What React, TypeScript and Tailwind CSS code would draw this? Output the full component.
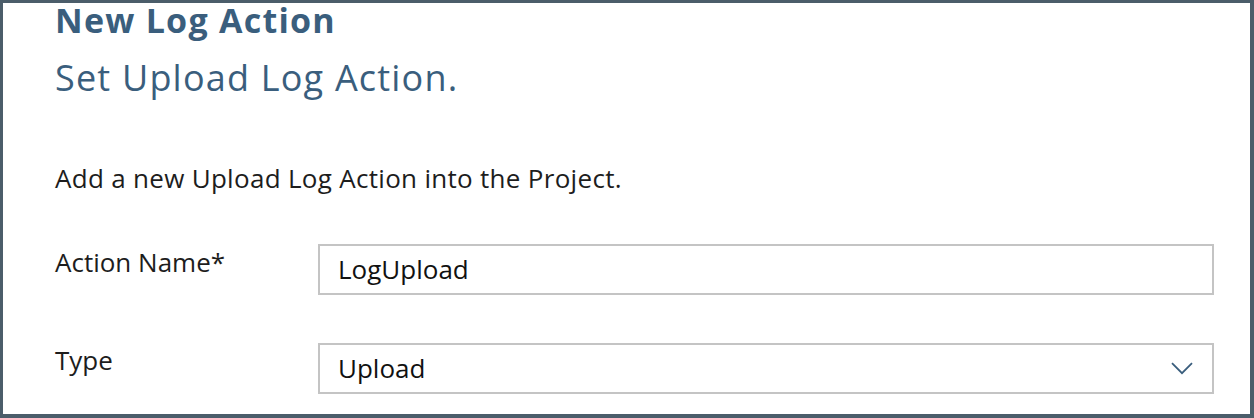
import React from 'react';

const App: React.FC = () => {
  return (
    <div className="w-[1254px] h-[418px] overflow-hidden bg-[#4b5d6a] pt-[3px] pl-[3px] pr-[4px] pb-[4px] font-['Open_Sans',sans-serif]">
      <div className="h-full bg-white pl-[52px] pr-[36px]">
        <h1 className="text-[34px] leading-[34px] font-bold tracking-[1.25px] text-[#3a5e7d]">New Log Action</h1>
        <h2 className="mt-[19px] text-[36px] leading-[44px] tracking-[1.2px] text-[#3a5e7d]">Set Upload Log Action.</h2>

        <p className="mt-[63px] text-[26px] leading-[30px] tracking-[0.3px] text-[#1d1d1d]">Add a new Upload Log Action into the Project.</p>

        <div className="mt-[51px] flex flex-col gap-[48px]">
          <div className="flex items-start">
            <label className="w-[263px] pt-[3px] text-[26px] leading-[30px] text-[#1d1d1d]">Action Name*</label>
            <div className="flex-1 h-[51px] border-2 border-[#c4c4c4] px-[18px] flex items-center text-[26px] text-[#111]">
              LogUpload
            </div>
          </div>
          <div className="flex items-start">
            <label className="w-[263px] pt-[2px] text-[26px] leading-[30px] text-[#1d1d1d]">Type</label>
            <div className="flex-1 h-[51px] border-2 border-[#c4c4c4] pl-[18px] pr-[19px] flex items-center justify-between text-[26px] text-[#111]">
              <span>Upload</span>
              <svg width="22" height="13" viewBox="0 0 22 13" fill="none">
                <path d="M1 1.2 L11 11.2 L21 1.2" stroke="#3a5e7d" strokeWidth="1.8" />
              </svg>
            </div>
          </div>
        </div>
      </div>
    </div>
  );
};

export default App;
